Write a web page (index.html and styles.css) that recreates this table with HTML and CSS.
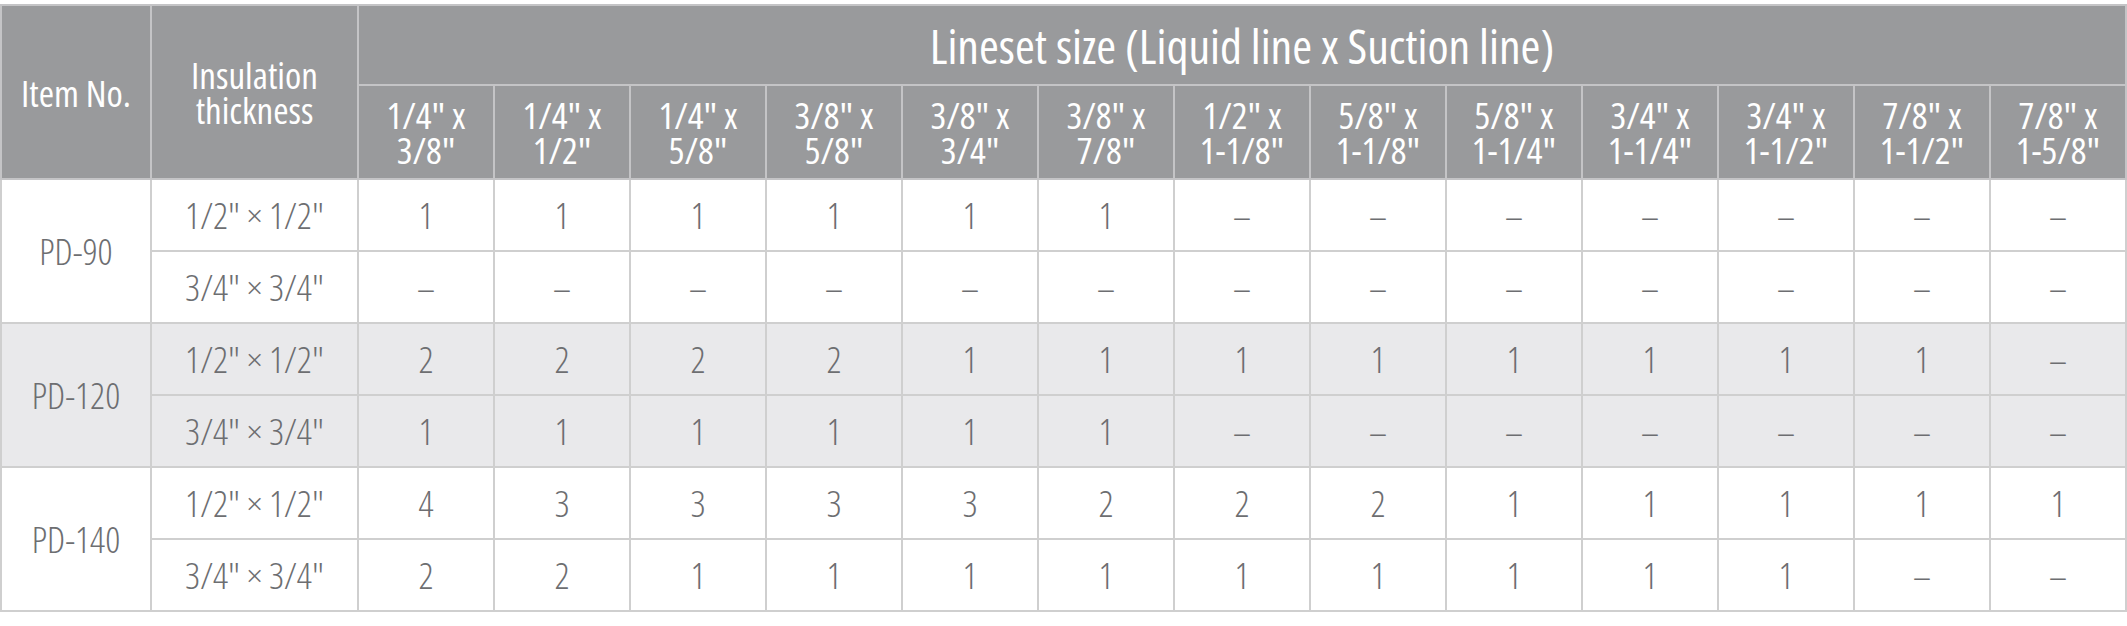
FILE: index.html
```html
<!DOCTYPE html>
<html>
<head>
<meta charset="utf-8">
<title>Lineset size</title>
<link rel="stylesheet" href="styles.css">
</head>
<body>
<table class="spec">
  <colgroup>
    <col class="c-item">
    <col class="c-ins">
    <col span="13" class="c-size">
  </colgroup>
  <thead>
    <tr class="h1">
      <th rowspan="2">Item No.</th>
      <th rowspan="2">Insulation<br>thickness</th>
      <th colspan="13" class="title">Lineset size (Liquid line x Suction line)</th>
    </tr>
    <tr class="h2">
      <th>1/4" x<br>3/8"</th>
      <th>1/4" x<br>1/2"</th>
      <th>1/4" x<br>5/8"</th>
      <th>3/8" x<br>5/8"</th>
      <th>3/8" x<br>3/4"</th>
      <th>3/8" x<br>7/8"</th>
      <th>1/2" x<br>1-1/8"</th>
      <th>5/8" x<br>1-1/8"</th>
      <th>5/8" x<br>1-1/4"</th>
      <th>3/4" x<br>1-1/4"</th>
      <th>3/4" x<br>1-1/2"</th>
      <th>7/8" x<br>1-1/2"</th>
      <th>7/8" x<br>1-5/8"</th>
    </tr>
  </thead>
  <tbody class="grp">
    <tr>
      <td rowspan="2">PD-90</td>
      <td>1/2" × 1/2"</td>
      <td>1</td><td>1</td><td>1</td><td>1</td><td>1</td><td>1</td><td>–</td><td>–</td><td>–</td><td>–</td><td>–</td><td>–</td><td>–</td>
    </tr>
    <tr>
      <td>3/4" × 3/4"</td>
      <td>–</td><td>–</td><td>–</td><td>–</td><td>–</td><td>–</td><td>–</td><td>–</td><td>–</td><td>–</td><td>–</td><td>–</td><td>–</td>
    </tr>
  </tbody>
  <tbody class="grp alt">
    <tr>
      <td rowspan="2">PD-120</td>
      <td>1/2" × 1/2"</td>
      <td>2</td><td>2</td><td>2</td><td>2</td><td>1</td><td>1</td><td>1</td><td>1</td><td>1</td><td>1</td><td>1</td><td>1</td><td>–</td>
    </tr>
    <tr>
      <td>3/4" × 3/4"</td>
      <td>1</td><td>1</td><td>1</td><td>1</td><td>1</td><td>1</td><td>–</td><td>–</td><td>–</td><td>–</td><td>–</td><td>–</td><td>–</td>
    </tr>
  </tbody>
  <tbody class="grp">
    <tr>
      <td rowspan="2">PD-140</td>
      <td>1/2" × 1/2"</td>
      <td>4</td><td>3</td><td>3</td><td>3</td><td>3</td><td>2</td><td>2</td><td>2</td><td>1</td><td>1</td><td>1</td><td>1</td><td>1</td>
    </tr>
    <tr>
      <td>3/4" × 3/4"</td>
      <td>2</td><td>2</td><td>1</td><td>1</td><td>1</td><td>1</td><td>1</td><td>1</td><td>1</td><td>1</td><td>1</td><td>–</td><td>–</td>
    </tr>
  </tbody>
</table>
</body>
</html>
```
FILE: styles.css
```css
html, body {
  margin: 0;
  padding: 0;
  background: #ffffff;
}
body {
  padding-top: 4px;
  font-family: "Open Sans", "DejaVu Sans", sans-serif;
  font-stretch: 75%;
}
.spec {
  width: 2127px;
  table-layout: fixed;
  border-collapse: collapse;
  border: 2px solid #d2d2d2;
}
.c-item { width: 150px; }
.c-ins { width: 207px; }
.spec th,
.spec td {
  border: 2px solid #cfcfcf;
  padding: 0;
  text-align: center;
  vertical-align: middle;
}
.spec th {
  background: #999a9c;
  color: #ffffff;
  font-weight: 400;
  font-size: 37px;
  line-height: 35px;
}
.spec thead th {
  border-color: #c4c4c6;
}
.h1 th.title {
  height: 76px;
  font-size: 48px;
  line-height: 50px;
  padding-top: 2px;
}
.h2 th {
  height: 92px;
}
.spec td {
  height: 70px;
  color: #6d6e71;
  font-weight: 300;
  font-size: 37px;
  line-height: 40px;
  background: #ffffff;
}
.grp.alt td {
  background: #e9e9eb;
}
```
